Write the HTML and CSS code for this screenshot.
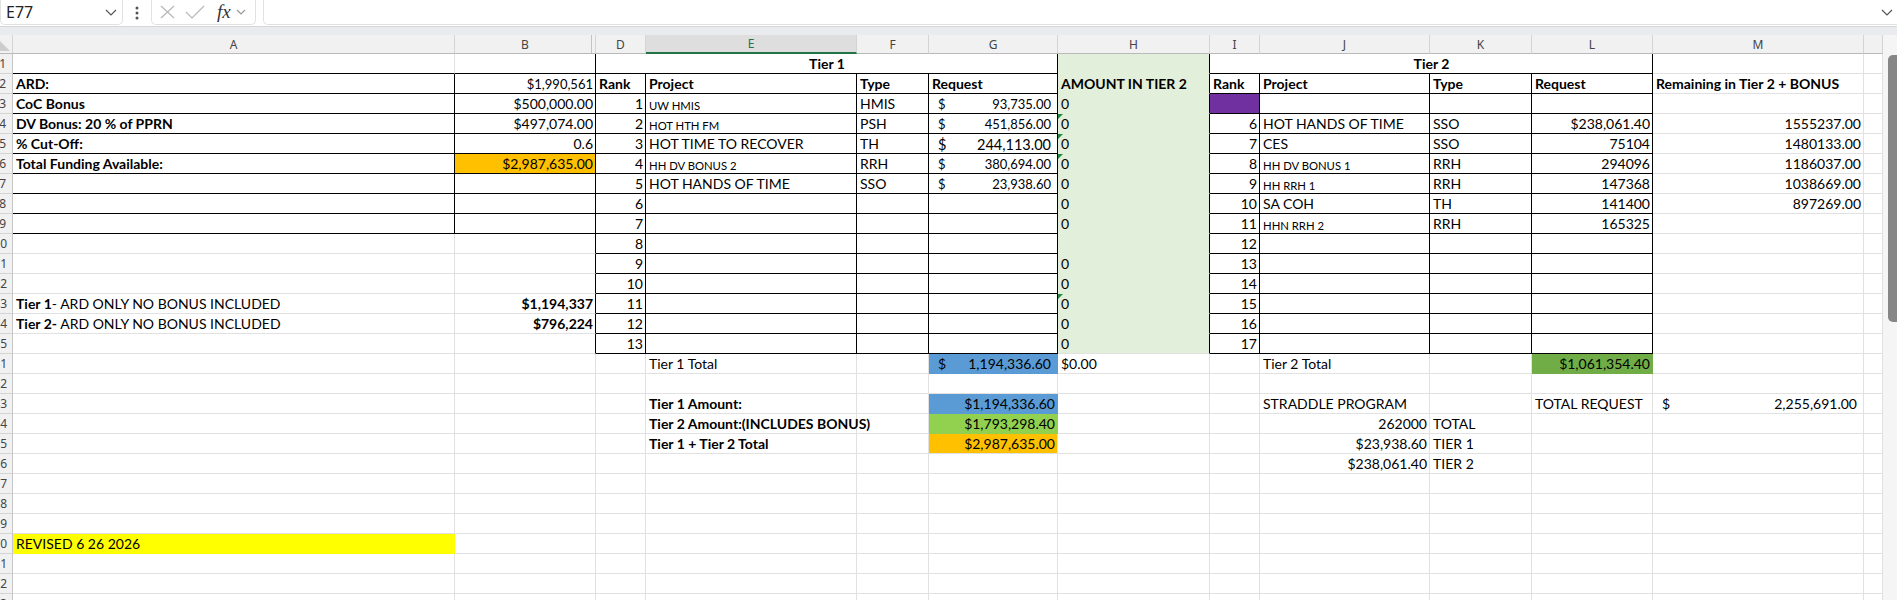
FILE: index.html
```html
<!DOCTYPE html>
<html lang="en">
<head>
    <meta charset="UTF-8">
    <title>CoC Ranking</title>
    <link rel="stylesheet" href="styles.css">
</head>
<body>

    <div class="formula-bar">
        <div class="name-box">
            <span>E77</span>
            <svg class="chev" width="12" height="7" viewBox="0 0 12 7"><polyline points="1,1 6,6 11,1" /></svg>
        </div>
        <div class="more">
            <svg width="4" height="14" viewBox="0 0 4 14"><circle cx="2" cy="2" r="1.5"/><circle cx="2" cy="7" r="1.5"/><circle cx="2" cy="12" r="1.5"/></svg>
        </div>
        <div class="fx-box">
            <svg class="ico" width="17" height="14" viewBox="0 0 17 14"><line x1="2" y1="1" x2="15" y2="13"/><line x1="15" y1="1" x2="2" y2="13"/></svg>
            <svg class="ico" width="20" height="14" viewBox="0 0 20 14"><polyline points="1,7 7,13 19,1"/></svg>
            <span class="fx">fx</span>
            <svg class="chev small" width="10" height="6" viewBox="0 0 10 6"><polyline points="1,1 5,5 9,1" /></svg>
        </div>
        <div class="formula-input">
            <svg class="chev" width="12" height="7" viewBox="0 0 12 7"><polyline points="1,1 6,6 11,1" /></svg>
        </div>
    </div>
    <div class="band"></div>

    <div class="sheet">
        <table class="grid">
            <colgroup>
                <col style="width:13px"><col style="width:442px"><col style="width:141px"><col style="width:50px">
                <col style="width:211px"><col style="width:72px"><col style="width:129px"><col style="width:152px">
                <col style="width:50px"><col style="width:170px"><col style="width:102px"><col style="width:121px">
                <col style="width:211px"><col style="width:19px">
            </colgroup>
            <thead>
                <tr>
                    <th class="corner"><span class="tri"></span></th>
                    <th>A</th><th class="hidden-next">B</th><th>D</th><th class="selected">E</th><th>F</th><th>G</th>
                    <th>H</th><th>I</th><th>J</th><th>K</th><th>L</th><th>M</th><th></th>
                </tr>
            </thead>
            <tbody>
                <tr>
                    <th>1</th>
                    <td class="bk"></td><td class="bk rk"></td>
                    <td colspan="4" class="bx hd ctr">Tier 1</td>
                    <td class="amt"></td>
                    <td colspan="4" class="bx hd ctr">Tier 2</td>
                    <td></td><td></td>
                </tr>
                <tr>
                    <th>2</th>
                    <td class="bx hd">ARD:</td><td class="bx num mid">$1,990,561</td>
                    <td class="bx hd">Rank</td><td class="bx hd">Project</td><td class="bx hd">Type</td><td class="bx hd">Request</td>
                    <td class="amt hd">AMOUNT IN TIER 2</td>
                    <td class="bx hd">Rank</td><td class="bx hd">Project</td><td class="bx hd">Type</td><td class="bx hd">Request</td>
                    <td class="hd">Remaining in Tier 2 + BONUS</td><td></td>
                </tr>
                <tr>
                    <th>3</th>
                    <td class="bx hd">CoC Bonus</td><td class="bx num">$500,000.00</td>
                    <td class="bx num">1</td><td class="bx sm">UW HMIS</td><td class="bx">HMIS</td>
                    <td class="bx acct mid"><span class="cur">$</span>93,735.00</td>
                    <td class="amt">0</td>
                    <td class="bx fill-purple"></td><td class="bx"></td><td class="bx"></td><td class="bx"></td>
                    <td></td><td></td>
                </tr>
                <tr>
                    <th>4</th>
                    <td class="bx hd">DV Bonus: 20 % of PPRN</td><td class="bx num">$497,074.00</td>
                    <td class="bx num">2</td><td class="bx sm">HOT HTH FM</td><td class="bx">PSH</td>
                    <td class="bx acct mid"><span class="cur">$</span>451,856.00</td>
                    <td class="amt err">0</td>
                    <td class="bx num">6</td><td class="bx">HOT HANDS OF TIME</td><td class="bx">SSO</td><td class="bx num">$238,061.40</td>
                    <td class="num">1555237.00</td><td></td>
                </tr>
                <tr>
                    <th>5</th>
                    <td class="bx hd">% Cut-Off:</td><td class="bx num">0.6</td>
                    <td class="bx num">3</td><td class="bx">HOT TIME TO RECOVER</td><td class="bx">TH</td>
                    <td class="bx acct lg"><span class="cur">$</span>244,113.00</td>
                    <td class="amt err">0</td>
                    <td class="bx num">7</td><td class="bx">CES</td><td class="bx">SSO</td><td class="bx num">75104</td>
                    <td class="num">1480133.00</td><td></td>
                </tr>
                <tr>
                    <th>6</th>
                    <td class="bx hd">Total Funding Available:</td><td class="bx num fill-orange">$2,987,635.00</td>
                    <td class="bx num">4</td><td class="bx sm">HH DV BONUS 2</td><td class="bx">RRH</td>
                    <td class="bx acct mid"><span class="cur">$</span>380,694.00</td>
                    <td class="amt err">0</td>
                    <td class="bx num">8</td><td class="bx sm">HH DV BONUS 1</td><td class="bx">RRH</td><td class="bx num">294096</td>
                    <td class="num">1186037.00</td><td></td>
                </tr>
                <tr>
                    <th>7</th>
                    <td class="bx"></td><td class="bx"></td>
                    <td class="bx num">5</td><td class="bx">HOT HANDS OF TIME</td><td class="bx">SSO</td>
                    <td class="bx acct mid"><span class="cur">$</span>23,938.60</td>
                    <td class="amt">0</td>
                    <td class="bx num">9</td><td class="bx sm">HH RRH 1</td><td class="bx">RRH</td><td class="bx num">147368</td>
                    <td class="num">1038669.00</td><td></td>
                </tr>
                <tr>
                    <th>8</th>
                    <td class="bx"></td><td class="bx"></td>
                    <td class="bx num">6</td><td class="bx"></td><td class="bx"></td><td class="bx"></td>
                    <td class="amt">0</td>
                    <td class="bx num">10</td><td class="bx">SA COH</td><td class="bx">TH</td><td class="bx num">141400</td>
                    <td class="num">897269.00</td><td></td>
                </tr>
                <tr>
                    <th>9</th>
                    <td class="bx"></td><td class="bx"></td>
                    <td class="bx num">7</td><td class="bx"></td><td class="bx"></td><td class="bx"></td>
                    <td class="amt">0</td>
                    <td class="bx num">11</td><td class="bx sm">HHN RRH 2</td><td class="bx">RRH</td><td class="bx num">165325</td>
                    <td></td><td></td>
                </tr>
                <tr>
                    <th>10</th>
                    <td></td><td class="rk"></td>
                    <td class="bx num">8</td><td class="bx"></td><td class="bx"></td><td class="bx"></td>
                    <td class="amt"></td>
                    <td class="bx num">12</td><td class="bx"></td><td class="bx"></td><td class="bx"></td>
                    <td></td><td></td>
                </tr>
                <tr>
                    <th>11</th>
                    <td></td><td class="rk"></td>
                    <td class="bx num">9</td><td class="bx"></td><td class="bx"></td><td class="bx"></td>
                    <td class="amt">0</td>
                    <td class="bx num">13</td><td class="bx"></td><td class="bx"></td><td class="bx"></td>
                    <td></td><td></td>
                </tr>
                <tr>
                    <th>12</th>
                    <td></td><td class="rk"></td>
                    <td class="bx num">10</td><td class="bx"></td><td class="bx"></td><td class="bx"></td>
                    <td class="amt">0</td>
                    <td class="bx num">14</td><td class="bx"></td><td class="bx"></td><td class="bx"></td>
                    <td></td><td></td>
                </tr>
                <tr>
                    <th>13</th>
                    <td><b>Tier 1</b>- ARD ONLY NO BONUS INCLUDED</td><td class="rk num hd">$1,194,337</td>
                    <td class="bx num">11</td><td class="bx"></td><td class="bx"></td><td class="bx"></td>
                    <td class="amt err">0</td>
                    <td class="bx num">15</td><td class="bx"></td><td class="bx"></td><td class="bx"></td>
                    <td></td><td></td>
                </tr>
                <tr>
                    <th>14</th>
                    <td><b>Tier 2-</b> ARD ONLY NO BONUS INCLUDED</td><td class="rk num hd">$796,224</td>
                    <td class="bx num">12</td><td class="bx"></td><td class="bx"></td><td class="bx"></td>
                    <td class="amt">0</td>
                    <td class="bx num">16</td><td class="bx"></td><td class="bx"></td><td class="bx"></td>
                    <td></td><td></td>
                </tr>
                <tr>
                    <th>15</th>
                    <td></td><td class="rk"></td>
                    <td class="bx num">13</td><td class="bx"></td><td class="bx"></td><td class="bx"></td>
                    <td class="amt last">0</td>
                    <td class="bx num">17</td><td class="bx"></td><td class="bx"></td><td class="bx"></td>
                    <td></td><td></td>
                </tr>
                <tr>
                    <th>61</th>
                    <td></td><td></td><td></td>
                    <td>Tier 1 Total</td><td></td>
                    <td class="acct fill-blue"><span class="cur">$</span>1,194,336.60</td>
                    <td>$0.00</td><td></td>
                    <td>Tier 2 Total</td><td></td>
                    <td class="num fill-green">$1,061,354.40</td>
                    <td></td><td></td>
                </tr>
                <tr>
                    <th>62</th>
                    <td></td><td></td><td></td><td></td><td></td><td></td><td></td><td></td><td></td><td></td><td></td><td></td><td></td>
                </tr>
                <tr>
                    <th>63</th>
                    <td></td><td></td><td></td>
                    <td class="hd">Tier 1 Amount:</td><td></td>
                    <td class="num fill-blue">$1,194,336.60</td>
                    <td></td><td></td>
                    <td>STRADDLE PROGRAM</td><td></td>
                    <td>TOTAL REQUEST</td>
                    <td class="acct"><span class="cur">$</span>2,255,691.00</td><td></td>
                </tr>
                <tr>
                    <th>64</th>
                    <td></td><td></td><td></td>
                    <td class="hd">Tier 2 Amount:(INCLUDES BONUS)</td><td></td>
                    <td class="num fill-lime">$1,793,298.40</td>
                    <td></td><td></td>
                    <td class="num">262000</td><td>TOTAL</td>
                    <td></td><td></td><td></td>
                </tr>
                <tr>
                    <th>65</th>
                    <td></td><td></td><td></td>
                    <td class="hd">Tier 1 + Tier 2 Total</td><td></td>
                    <td class="num fill-orange">$2,987,635.00</td>
                    <td></td><td></td>
                    <td class="num">$23,938.60</td><td>TIER 1</td>
                    <td></td><td></td><td></td>
                </tr>
                <tr>
                    <th>66</th>
                    <td></td><td></td><td></td><td></td><td></td><td></td><td></td><td></td>
                    <td class="num">$238,061.40</td><td>TIER 2</td>
                    <td></td><td></td><td></td>
                </tr>
                <tr>
                    <th>67</th>
                    <td></td><td></td><td></td><td></td><td></td><td></td><td></td><td></td><td></td><td></td><td></td><td></td><td></td>
                </tr>
                <tr>
                    <th>68</th>
                    <td></td><td></td><td></td><td></td><td></td><td></td><td></td><td></td><td></td><td></td><td></td><td></td><td></td>
                </tr>
                <tr>
                    <th>69</th>
                    <td></td><td></td><td></td><td></td><td></td><td></td><td></td><td></td><td></td><td></td><td></td><td></td><td></td>
                </tr>
                <tr>
                    <th>70</th>
                    <td class="fill-yellow">REVISED 6 26 2026</td>
                    <td></td><td></td><td></td><td></td><td></td><td></td><td></td><td></td><td></td><td></td><td></td><td></td>
                </tr>
                <tr>
                    <th>71</th>
                    <td></td><td></td><td></td><td></td><td></td><td></td><td></td><td></td><td></td><td></td><td></td><td></td><td></td>
                </tr>
                <tr>
                    <th>72</th>
                    <td></td><td></td><td></td><td></td><td></td><td></td><td></td><td></td><td></td><td></td><td></td><td></td><td></td>
                </tr>
                <tr>
                    <th>73</th>
                    <td></td><td></td><td></td><td></td><td></td><td></td><td></td><td></td><td></td><td></td><td></td><td></td><td></td>
                </tr>
            </tbody>
        </table>

        <div class="vscroll">
            <div class="thumb"></div>
        </div>
    </div>

</body>
</html>
```

FILE: styles.css
```css
body {
    margin: 0;
    width: 1897px;
    height: 600px;
    overflow: hidden;
    background: #fff;
    font-family: Lato, "Liberation Sans", sans-serif;
    color: #000;
}

/* formula bar */
.formula-bar {
    display: flex;
    height: 26px;
    background: #fff;
    border-bottom: 1px solid #d6d6d6;
}
.name-box,
.fx-box,
.formula-input {
    display: flex;
    align-items: center;
    height: 25px;
    box-sizing: border-box;
    background: #fff;
    border: 1px solid #e1e1e1;
    border-top: none;
    border-radius: 0 0 5px 5px;
}
.name-box {
    width: 123px;
    padding: 0 5px 0 5px;
    justify-content: space-between;
    font-family: "Noto Sans", sans-serif;
    font-size: 16px;
    color: #222;
}
.chev polyline {
    fill: none;
    stroke: #555;
    stroke-width: 1.2;
}
.more {
    width: 28px;
    display: flex;
    align-items: center;
    justify-content: center;
}
.more circle {
    fill: #555;
}
.fx-box {
    width: 105px;
    padding: 0 4px 0 7px;
    gap: 9px;
}
.ico line,
.ico polyline {
    fill: none;
    stroke: #b8b8b8;
    stroke-width: 1.2;
}
.fx {
    font-family: "Liberation Serif", serif;
    font-style: italic;
    font-size: 19px;
    color: #333;
    margin-left: 3px;
    margin-right: -4px;
}
.chev.small polyline {
    stroke: #999;
}
.formula-input {
    flex: 1;
    margin-left: 7px;
    margin-right: -6px;
    justify-content: flex-end;
    padding-right: 9px;
}
.band {
    height: 8px;
    background: #e9ebee;
}

/* sheet */
.sheet {
    display: flex;
}
.grid {
    width: 1883px;
    table-layout: fixed;
    border-collapse: separate;
    border-spacing: 0;
}
.grid td,
.grid th {
    box-sizing: border-box;
    height: 20px;
    padding: 0 2px 0 3px;
    border-right: 1px solid #e1e1e1;
    border-bottom: 1px solid #e1e1e1;
    white-space: nowrap;
    overflow: visible;
    font-size: 14px;
    line-height: 1.2;
    vertical-align: bottom;
    position: relative;
}
.grid thead th {
    height: 18px;
    padding: 0;
    background: #f1f1f1;
    color: #444;
    font-family: "Noto Sans", sans-serif;
    font-size: 12px;
    font-weight: normal;
    line-height: 17px;
    text-align: center;
    vertical-align: middle;
    border-right: 1px solid #d4d4d4;
    border-bottom: 1px solid #b9b9b9;
}
.grid thead th.selected {
    background: #dedede;
    color: #217346;
    border-bottom: 2px solid #217346;
}
.grid thead th.hidden-next {
    box-shadow: inset -3px 0 0 #f1f1f1, inset -4px 0 0 #c4c4c4;
}
.corner .tri {
    position: absolute;
    left: 0;
    bottom: 2px;
    border-left: 10px solid transparent;
    border-bottom: 10px solid #cdcdcd;
    transform: scaleX(-1);
}
.grid tbody th {
    direction: rtl;
    overflow: hidden;
    padding: 0 6px 0 0;
    background: #f1f1f1;
    color: #444;
    font-family: "Noto Sans", sans-serif;
    font-size: 12px;
    font-weight: normal;
    line-height: 19px;
    text-align: right;
    vertical-align: middle;
    border-right: 1px solid #c6c6c6;
    border-bottom: 1px solid #d4d4d4;
}

/* cell formats */
.grid .hd,
.grid b {
    font-weight: bold;
}
.grid .num {
    text-align: right;
}
.grid .ctr {
    text-align: center;
}
.grid .sm {
    font-size: 11.3px;
}
.grid .mid {
    font-size: 13px;
}
.grid .lg {
    font-size: 14.5px;
}
.grid .acct {
    text-align: right;
    padding-right: 6px;
}
.cur {
    float: left;
    margin-left: 6px;
}

/* borders */
.grid .rk {
    border-right-color: #000;
}
.grid .bk {
    border-bottom-color: #000;
}
.grid .bx {
    border-right-color: #000;
    border-bottom-color: #000;
}

/* fills */
.grid .amt {
    background: #e2efda;
    border-right-color: #000;
    border-bottom-color: #e2efda;
}
.grid .amt.last {
    border-bottom-color: #e1e1e1;
}
.err::before {
    content: "";
    position: absolute;
    left: 0;
    top: 0;
    border-top: 5px solid #1f8a3c;
    border-right: 5px solid transparent;
}
.grid .fill-orange {
    background: #ffc000;
}
.grid .fill-blue {
    background: #5b9bd5;
    border-color: #5b9bd5;
}
.grid .fill-lime {
    background: #92d050;
    border-color: #92d050;
}
.grid .fill-green {
    background: #70ad47;
    border-color: #70ad47;
}
.grid .fill-purple {
    background: #7030a0;
}
.grid .fill-yellow {
    background: #ffff00;
    border-color: #ffff00;
}

/* scrollbar */
.vscroll {
    flex: 1;
    position: relative;
    background: #f5f5f5;
    height: 565px;
}
.thumb {
    position: absolute;
    right: 0;
    top: 20px;
    width: 9px;
    height: 267px;
    background: #868686;
    border-radius: 5px 0 0 5px;
}
```
